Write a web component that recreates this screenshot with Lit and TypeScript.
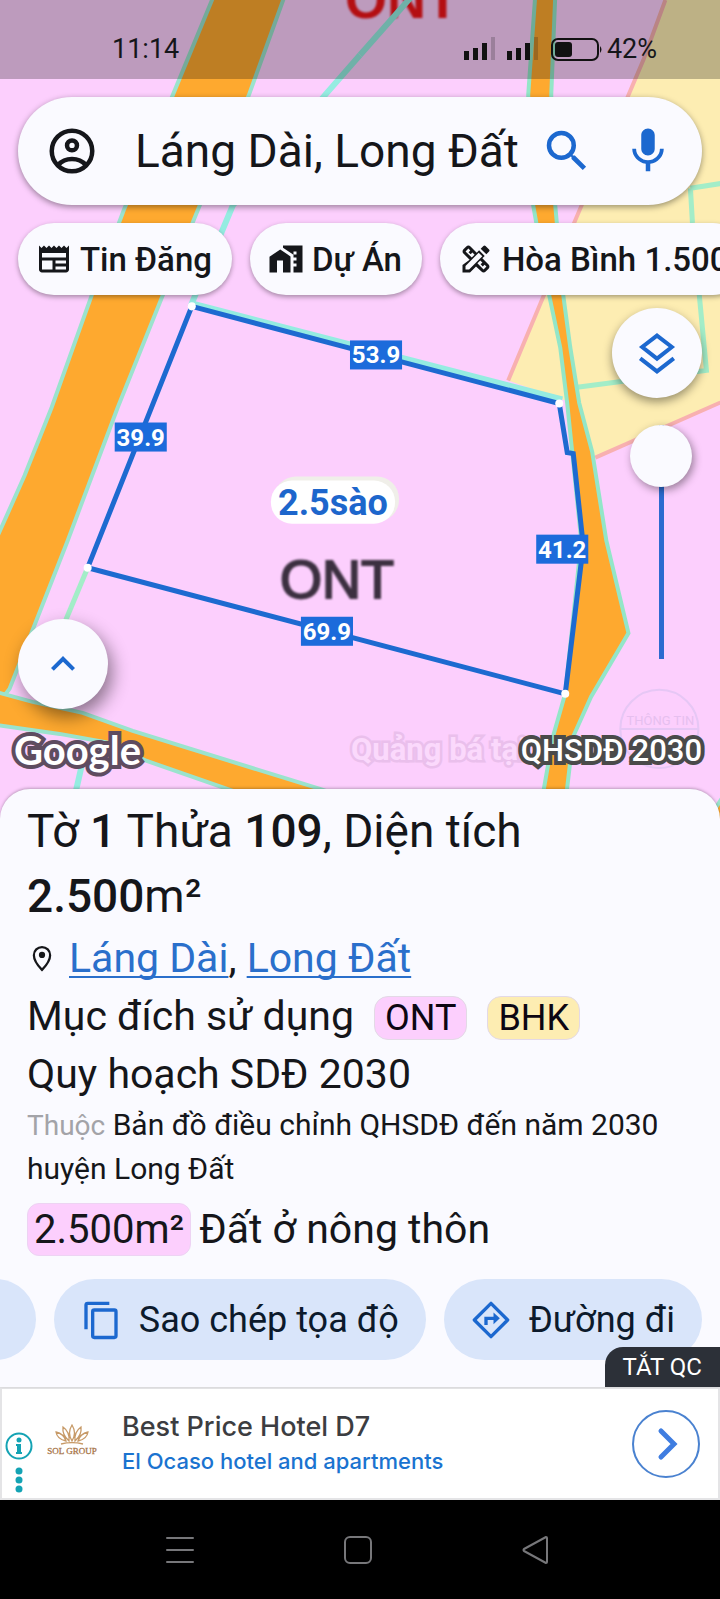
import { LitElement, html, svg, css } from "lit";
import { customElement, property } from "lit/decorators.js";

const glyphs: Record<string, unknown> = {
  account: svg`<g fill="none" stroke="currentColor" stroke-width="2"><circle cx="12" cy="12" r="9"/><circle cx="12" cy="9.500" r="2.200"/><path d="M5.800 18.300c3.200-3.600 9.200-3.600 12.400 0"/></g>`,
  search: svg`<path d="M15.500 14h-.79l-.28-.27A6.470 6.470 0 0 0 16 9.500 6.500 6.500 0 1 0 9.500 16c1.610 0 3.090-.59 4.230-1.570l.27.28v.79l5 4.990L20.490 19l-4.990-5zm-6 0a4.500 4.500 0 1 1 0-9 4.500 4.500 0 0 1 0 9z"/>`,
  mic: svg`<path d="M12 14c1.660 0 2.990-1.340 2.990-3L15 5c0-1.660-1.340-3-3-3S9 3.340 9 5v6c0 1.660 1.340 3 3 3zm5.300-3c0 3-2.540 5.100-5.300 5.100S6.700 14 6.700 11H5c0 3.410 2.720 6.230 6 6.720V21h2v-3.280c3.280-.48 6-3.300 6-6.720h-1.700z"/>`,
  news: svg`<path fill-rule="evenodd" d="M22 3l-1.670 1.670L18.670 3 17 4.670 15.330 3l-1.660 1.670L12 3l-1.670 1.670L8.670 3 7 4.670 5.330 3 3.670 4.670 2 3v16c0 1.100.9 2 2 2h16c1.100 0 2-.9 2-2V3zM11 19H4v-6h7v6zm9 0h-7v-2h7v2zm0-4h-7v-2h7v2zm0-4H4V8h16v3z"/>`,
  project: svg`<path d="M8.170 5.700L1 10.480V21h5v-8h4v8h5V10.250z"/><path fill-rule="evenodd" d="M10 3v1.510l7 4.680V11h2v2h-2v2h2v2h-2v4h6V3H10zm9 6h-2V7h2v2z"/>`,
  design: svg`<path fill-rule="evenodd" d="M16.240 11.510l1.570-1.570-3.750-3.750-1.570 1.570-4.140-4.130c-.78-.78-2.050-.78-2.830 0l-1.900 1.900c-.78.78-.78 2.050 0 2.830l4.130 4.130L3 16V21h5l4-4 3.640 3.370c.95.95 2.230.6 2.830 0l1.900-1.900c.78-.78.78-2.050 0-2.830l-4.130-4.130zM9.180 11.070L5.040 6.940l1.890-1.900 1.270 1.270L7.020 7.500l1.410 1.410 1.190-1.190 1.450 1.450-1.890 1.900zM7.400 19H5v-2.400l8.800-8.800 2.400 2.400L7.400 19zm9.660-.04l-4.130-4.130 1.900-1.900 1.450 1.450-1.190 1.190 1.410 1.410 1.190-1.190 1.270 1.270-1.900 1.900z"/><path d="M20.710 7.040a1 1 0 0 0 0-1.410l-2.340-2.340a1 1 0 0 0-1.410 0l-1.830 1.830 3.750 3.750 1.830-1.830z"/>`,
  layers: svg`<g fill="none" stroke="currentColor" stroke-width="2"><path d="M12 3.300l7.400 5.700-7.400 5.800L4.600 9z"/><path d="M3.600 14.700l8.400 6.500 8.400-6.500"/></g>`,
  up: svg`<path d="M12 8l-6 6 1.410 1.410L12 10.830l4.590 4.580L18 14z"/>`,
  pin: svg`<path fill="none" stroke="currentColor" stroke-width="1.800" d="M12 21.500c-4-4.200-6.500-8-6.500-11.800a6.500 6.500 0 0 1 13 0c0 3.800-2.500 7.600-6.500 11.800z"/><circle cx="12" cy="9.500" r="2.500"/>`,
  copy: svg`<g fill="none" stroke="currentColor" stroke-width="2"><rect x="7" y="6" width="14" height="16.500" rx="1"/><path d="M3 17.500V3a1 1 0 0 1 1-1h13"/></g>`,
  route: svg`<path fill="none" stroke="currentColor" stroke-width="2" stroke-linejoin="round" d="M12 2l10 10-10 10L2 12z"/><path fill="none" stroke="currentColor" stroke-width="2" d="M9 15v-4h5"/><path d="M13.500 7.500L17.300 11l-3.800 3.500z"/>`,
};

@customElement("ui-icon")
export class UiIcon extends LitElement {
  static styles = css`
    :host { display: inline-flex; flex: none; width: 24px; height: 24px; }
    .glyph { width: 100%; height: 100%; fill: currentColor; }
  `;
  @property() name = "";
  render() {
    return html`<svg class="glyph" viewBox="0 0 24 24" aria-hidden="true">${glyphs[this.name]}</svg>`;
  }
}

const edges = [
  { x: 376, y: 354, length: "53.9" },
  { x: 141, y: 436, length: "39.9" },
  { x: 562, y: 548, length: "41.2" },
  { x: 327, y: 630, length: "69.9" },
];
const corners = [[192, 306], [559, 403], [565, 693], [88, 567]];

@customElement("parcel-map")
export class ParcelMap extends LitElement {
  static styles = css`
    :host { display: block; overflow: hidden; background: #fccffd; }
    .canvas { display: block; width: 100%; height: 100%; }
    .road { fill: #fea92f; stroke: #9be3cd; stroke-width: 4; }
    .lane { fill: #fea92f; stroke: #93e6c8; stroke-width: 8; paint-order: stroke; }
    .stream { fill: none; stroke: #95ece1; stroke-width: 6; }
    .ditch { fill: none; stroke: #a3edc8; stroke-width: 5; }
    .field { fill: #fdedb2; }
    .border { fill: none; stroke: #f8b0b0; stroke-width: 4; }
    .parcel { fill: none; stroke: #1d6ad0; stroke-width: 5; }
    .corner { fill: #fff; }
    .tag { fill: #1c6bdb; }
    .length { font: 700 24px Roboto, sans-serif; fill: #fff; text-anchor: middle; }
    .pill-back { fill: #f0efe9; }
    .pill { fill: #fff; }
    .area { font: 700 36px Roboto, sans-serif; fill: #1d66cc; text-anchor: middle; }
    .zone { font: 54px "Liberation Sans", sans-serif; fill: #3c3040; stroke: #3c3040; stroke-width: 2; text-anchor: middle; filter: blur(1px); }
    .zone-red { font: 700 54px "Liberation Sans", sans-serif; fill: #f01418; text-anchor: middle; filter: blur(1px); }
    .mark { font: 700 31px Roboto, sans-serif; fill: #fbd9fc; stroke: #eabfec; stroke-width: 5; paint-order: stroke; }
    .stamp { fill: none; stroke: #e6c7f5; stroke-width: 2; }
    .stamp-text { font: 13px Roboto, sans-serif; fill: #e6bfef; text-anchor: middle; }
  `;
  render() {
    return html`
      <svg class="canvas" viewBox="0 0 720 820" preserveAspectRatio="xMidYMin slice">
        <path class="field" d="M665 0L643 60 575 220 508 380 580 405 595 457 720 402V0z"/>
        <path class="border" d="M665 0L643 60 575 220 508 380M595 457L720 402"/>
        <path class="ditch" d="M690 188L722 183M690 188L692 222 706 370 575 387"/>
        <path class="stream" d="M360 55L325 95 233 205 192 303 562 399M82 765L74 800"/>
        <path class="ditch" d="M88 567L60 634"/>
        <text class="zone-red" x="402" y="18">ONT</text>
        <path class="stream" d="M412 -4L360 55"/>
        <path class="road" d="M213 -2L173 95 124 210 92 295 52 407 25 475 -4 540V706L10 688 68 540 118 407 163 295 200 205 249 95 284 -2z"/>
        <path class="road" d="M-4 691L33 701 83 712 133 730 320 788 400 815H300L233 790 147 760 110 742 60 733 -4 724z"/>
        <path class="lane" d="M537 -4L530 95 535 205 551 295 562 347 569 403 574 452 583 540 567 693 555 735 540 820H561L571 735 589 695 626 632 604 540 590 452 577 403 568 347 561 295 553 205 549 95 553 -4z"/>
        <path class="road" d="M712 812L723 795V830z"/>
        <path class="parcel" d="M192 306L559 403 567 452 573 453 583 545 565 693 88 567z"/>
        ${corners.map(([x, y]) => svg`<circle class="corner" cx=${x} cy=${y} r="4"/>`)}
        ${edges.map((e) => svg`
          <rect class="tag" x=${e.x - 26} y=${e.y - 14} width="52" height="29"/>
          <text class="length" x=${e.x} y=${e.y + 9}>${e.length}</text>`)}
        <rect class="pill-back" x="274" y="476" width="125" height="45" rx="22"/>
        <rect class="pill" x="271" y="480" width="124" height="43" rx="21"/>
        <text class="area" x="333" y="514">2.5sào</text>
        <text class="zone" x="337" y="597">ONT</text>
        <text class="mark" x="351" y="759">Quảng bá tại</text>
        <circle class="stamp" cx="659" cy="728" r="39"/>
        <path class="stamp" d="M620 728h78"/>
        <text class="stamp-text" x="660" y="724">THÔNG TIN</text>
      </svg>`;
  }
}

@customElement("app-root")
export class AppRoot extends LitElement {
  static styles = css`
    :host { display: block; font-family: Roboto, sans-serif; color: #15161a; }
    * { box-sizing: border-box; }
    button, input { font: inherit; color: inherit; border: 0; padding: 0; margin: 0; background: none; }
    button { cursor: pointer; }
    .page { display: flex; flex-direction: column; min-height: 100vh; overflow: hidden; background: #fafaff; }

    .map { position: relative; isolation: isolate; flex: 1; display: flex; flex-direction: column; padding-bottom: 46px; }
    .backdrop { position: absolute; inset: 0; z-index: -1; }

    .status { display: flex; align-items: center; justify-content: space-between; height: 79px; padding: 19px 63px 0 112px; background: rgba(0, 0, 0, .25); font-size: 27px; }
    .status-icons { display: flex; align-items: center; gap: 4px; }
    .signals { width: 142px; height: 28px; }

    .search { display: flex; align-items: center; height: 108px; margin: 18px 18px 0; padding: 0 27px; border-radius: 54px; background: #fafaff; box-shadow: 0 2px 6px rgba(0, 0, 0, .4); }
    .search button { display: grid; }
    .search ui-icon { width: 54px; height: 54px; }
    .query { flex: 1; min-width: 0; height: 60px; padding-left: 36px; font-size: 46px; outline: 0; }
    .blue { color: #1c68cf; }
    .blue + .blue { margin-left: 27px; }

    .chips { display: flex; gap: 18px; padding: 18px 18px 0; }
    .chip { flex: none; display: flex; align-items: center; gap: 8px; height: 72px; padding: 0 20px 0 18px; border-radius: 36px; background: #fafaff; box-shadow: 0 2px 5px rgba(0, 0, 0, .35); font-size: 33px; font-weight: 500; white-space: nowrap; }
    .chip ui-icon { width: 36px; height: 36px; }

    .controls { flex: 1; display: flex; justify-content: space-between; padding: 13px 18px 0; }
    .left { display: flex; align-items: flex-end; }
    .right { display: flex; flex-direction: column; align-items: flex-end; gap: 27px; }
    .round { display: grid; place-items: center; width: 90px; height: 90px; border-radius: 50%; background: #fafaff; color: #1c68cf; box-shadow: 0 4px 10px rgba(0, 0, 0, .4); }
    .left .round { box-shadow: 4px 8px 18px rgba(0, 0, 0, .45); }
    .round ui-icon { width: 48px; height: 48px; }
    .opacity { appearance: none; writing-mode: vertical-lr; direction: rtl; width: 62px; height: 234px; margin-right: 10px; background: linear-gradient(#2c6bd0, #2c6bd0) center / 5px 100% no-repeat; }
    .opacity::-webkit-slider-thumb { appearance: none; width: 62px; height: 62px; border-radius: 50%; background: #fafaff; box-shadow: 2px 3px 8px rgba(0, 0, 0, .4); }
    .credits { display: flex; justify-content: space-between; align-items: center; height: 50px; margin: 16px 18px 0 14px; color: #fff; }
    .google { font: 700 40px Lato, sans-serif; -webkit-text-stroke: 8px #5e4c60; paint-order: stroke fill; }
    .layer-name { font-size: 31px; font-weight: 500; -webkit-text-stroke: 8px #4a4a4a; paint-order: stroke fill; }

    .sheet { position: relative; margin-top: -32px; padding-top: 10px; border-radius: 30px 30px 0 0; background: #fafaff; box-shadow: 0 -1px 3px rgba(0, 0, 0, .25); }
    .details { padding: 0 27px; }
    .title { margin: 0; font-size: 46px; line-height: 65px; font-weight: 400; max-width: 580px; }
    .title strong { font-weight: 500; }
    .row { display: flex; align-items: center; margin: 0; font-size: 41px; line-height: 58px; font-weight: 400; }
    .place ui-icon { width: 30px; height: 30px; margin-right: 12px; }
    .place a { color: #2a6fcb; text-decoration: underline 2px; text-underline-offset: 4px; text-decoration-skip-ink: none; }
    .use { align-items: baseline; gap: 20px; }
    .badge { padding: 0 10px; border: 1px solid #e3d9e6; border-radius: 14px; font-size: 36px; line-height: 42px; color: #0c0612; }
    .pink { background: #fccffd; }
    .yellow { background: #fdedb2; }
    .source { margin: 0 0 13px; font-size: 30px; line-height: 43px; }
    .muted { color: #a3a3a8; font-size: 28px; }
    .amount { padding: 0 6px; border: 1px solid #edd3f3; border-radius: 12px; font-size: 40px; line-height: 51px; margin-right: 8px; }
    .area-row { line-height: 53px; }

    .actions { display: flex; justify-content: flex-end; gap: 18px; padding: 23px 18px 27px; overflow: hidden; }
    .action { flex: none; display: flex; align-items: center; gap: 18px; height: 81px; padding: 0 27px; border-radius: 41px; background: #d9e5fa; color: #0c1a2c; font-size: 36px; }
    .action ui-icon { width: 40px; height: 40px; color: #1c68cf; }
    .more { width: 160px; }
    .close-ad { position: absolute; right: 0; bottom: 0; height: 40px; padding: 0 18px; border-radius: 18px 0 0 0; background: #2c3038; color: #fff; font-size: 24px; }

    .ad { display: flex; align-items: center; height: 113px; padding: 0 18px 0 3px; border: 2px solid #e4e4e6; background: #fff; }
    .ad-info { width: 28px; height: 62px; margin-top: 38px; }
    .ad-logo { width: 56px; height: 34px; margin: 0 22px 8px 11px; }
    .ad-text { flex: 1; display: flex; flex-direction: column; color: #3c3d41; font: 500 27px/34px Inter, sans-serif; text-decoration: none; white-space: nowrap; }
    .ad-sub { color: #1a73d0; font-size: 22px; }
    .ad-go { width: 68px; height: 68px; }
    .brand { font: 9px "Liberation Serif", serif; fill: #a8764a; stroke: #a8764a; stroke-width: 0.3; text-anchor: middle; }

    .nav { display: flex; justify-content: center; align-items: center; gap: 150px; height: 99px; padding-right: 4px; background: #000; }
    .nav button { width: 28px; height: 28px; }
    .nav svg { display: block; width: 28px; height: 28px; fill: none; stroke: #77777a; stroke-width: 2; stroke-linejoin: round; stroke-linecap: round; }
  `;

  render() {
    return html`
      <main class="page">
        <section class="map">
          <parcel-map class="backdrop"></parcel-map>
          <div class="status">
            <span>11:14</span>
            <span class="status-icons">
              <svg class="signals" viewBox="0 0 142 28" fill="#111" aria-hidden="true">
                <path d="M3 16h5v9H3zM12 13h5v12h-5zM21 8h5v17h-5zM46 16h5v9h-5zM55 13h5v12h-5zM64 8h5v17h-5z"/>
                <path opacity=".2" d="M30 2h4v23h-4zM73 2h4v23h-4z"/>
                <rect x="91" y="4" width="46" height="21" rx="6" fill="none" stroke="#111" stroke-width="2"/>
                <rect x="94" y="7" width="17" height="15" rx="3"/>
                <path d="M139 11q3 3.500 0 7z"/>
              </svg>
              <span>42%</span>
            </span>
          </div>
          <form class="search" role="search">
            <button type="button" aria-label="Tài khoản"><ui-icon name="account"></ui-icon></button>
            <input class="query" type="text" aria-label="Tìm kiếm" value="Láng Dài, Long Đất" />
            <button class="blue" type="button" aria-label="Tìm"><ui-icon name="search"></ui-icon></button>
            <button class="blue" type="button" aria-label="Giọng nói"><ui-icon name="mic"></ui-icon></button>
          </form>
          <div class="chips">
            <button class="chip"><ui-icon name="news"></ui-icon>Tin Đăng</button>
            <button class="chip"><ui-icon name="project"></ui-icon>Dự Án</button>
            <button class="chip"><ui-icon name="design"></ui-icon>Hòa Bình 1.500</button>
          </div>
          <div class="controls">
            <div class="left"><button class="round" aria-label="Mở rộng"><ui-icon name="up"></ui-icon></button></div>
            <div class="right">
              <button class="round" aria-label="Lớp bản đồ"><ui-icon name="layers"></ui-icon></button>
              <input class="opacity" type="range" min="0" max="100" value="100" aria-label="Độ mờ" />
            </div>
          </div>
          <div class="credits"><span class="google">Google</span><span class="layer-name">QHSDĐ 2030</span></div>
        </section>

        <section class="sheet">
          <div class="details">
            <h1 class="title">Tờ <strong>1</strong> Thửa <strong>109</strong>, Diện tích <strong>2.500</strong>m²</h1>
            <p class="row place"><ui-icon name="pin"></ui-icon><span><a href="#lang-dai">Láng Dài</a>, <a href="#long-dat">Long Đất</a></span></p>
            <p class="row use"><span>Mục đích sử dụng</span><span class="badge pink">ONT</span><span class="badge yellow">BHK</span></p>
            <h2 class="row">Quy hoạch SDĐ 2030</h2>
            <p class="source"><span class="muted">Thuộc</span> Bản đồ điều chỉnh QHSDĐ đến năm 2030 huyện Long Đất</p>
            <p class="row area-row"><span class="amount pink">2.500m²</span>Đất ở nông thôn</p>
          </div>
          <div class="actions">
            <button class="action more" aria-label="Thêm"></button>
            <button class="action"><ui-icon name="copy"></ui-icon>Sao chép tọa độ</button>
            <button class="action"><ui-icon name="route"></ui-icon>Đường đi</button>
          </div>
          <button class="close-ad">TẮT QC</button>
        </section>

        <aside class="ad">
          <svg class="ad-info" viewBox="0 0 28 62" aria-hidden="true">
            <circle cx="14" cy="14" r="12.500" fill="none" stroke="#14a3b4" stroke-width="2"/>
            <g fill="#14a3b4"><circle cx="14" cy="8" r="2.500"/><path d="M12 12h4v9h-4zM11 12h3v2h-3zM11 20h6v2h-6z"/>
            <circle cx="14" cy="39" r="3.500"/><circle cx="14" cy="48" r="3.500"/><circle cx="14" cy="57" r="3.500"/></g>
          </svg>
          <svg class="ad-logo" viewBox="0 0 56 34">
            <g fill="none" stroke="#c79a68" stroke-width="1.300">
              <path d="M28 2q-5 8 0 16q5-8 0-16zM19 4q-1 8 6 14q1-9-6-14zM37 4q1 8-6 14q-1-9 6-14zM12 9q1 7 10 9q-2-7-10-9zM44 9q-1 7-10 9q2-7 10-9zM17 21q11-3 22 0"/>
            </g>
            <text class="brand" x="28" y="31">SOL GROUP</text>
          </svg>
          <a class="ad-text" href="#ad"><span>Best Price Hotel D7</span><span class="ad-sub">El Ocaso hotel and apartments</span></a>
          <button class="ad-go" aria-label="Mở quảng cáo">
            <svg viewBox="0 0 68 68" fill="none" stroke="#3f7de0" aria-hidden="true">
              <circle cx="34" cy="34" r="33" stroke="#4a82d0" stroke-width="2"/>
              <path d="M29 21l13 13-13 13" stroke-width="5" stroke-linecap="round"/>
            </svg>
          </button>
        </aside>

        <nav class="nav">
          <button aria-label="Gần đây"><svg viewBox="0 0 28 28"><path d="M1 2h26M1 14h26M1 26h26"/></svg></button>
          <button aria-label="Trang chủ"><svg viewBox="0 0 28 28"><rect x="1" y="1" width="26" height="26" rx="5"/></svg></button>
          <button aria-label="Quay lại"><svg viewBox="0 0 28 28"><path d="M25 2v24q0 1-1 1L2 15q-1-1 0-2L24 1q1 0 1 1z"/></svg></button>
        </nav>
      </main>`;
  }
}
